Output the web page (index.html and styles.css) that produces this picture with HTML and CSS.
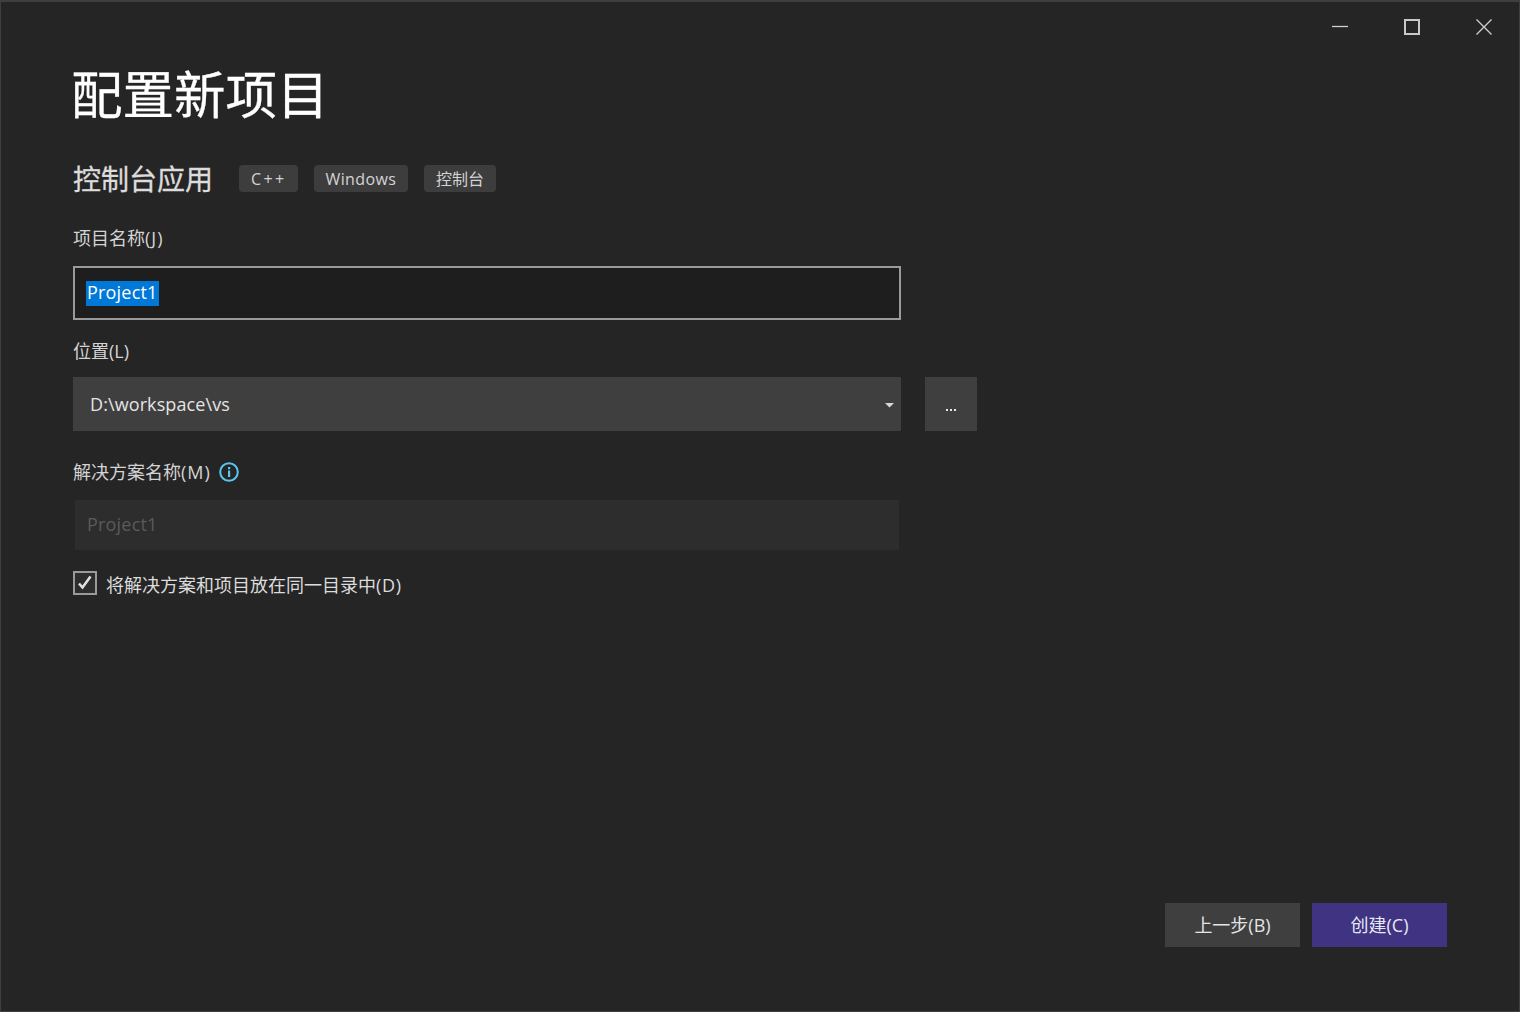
FILE: index.html
```html
<!DOCTYPE html>
<html lang="zh-CN">
<head>
<meta charset="utf-8">
<title>配置新项目</title>
<link rel="stylesheet" href="styles.css">
</head>
<body>
<div class="window">
  <div class="caption">
    <button class="cap-btn"><svg width="16" height="16" viewBox="0 0 16 16"><path d="M0 7.500h16" stroke="#d0d0d0" stroke-width="1.300"/></svg></button>
    <button class="cap-btn"><svg width="16" height="16" viewBox="0 0 16 16"><rect x="1" y="1" width="14" height="14" fill="none" stroke="#c8c8c8" stroke-width="2"/></svg></button>
    <button class="cap-btn"><svg width="16" height="16" viewBox="0 0 16 16"><path d="M.5.5l15 15M15.500.5l-15 15" stroke="#d0d0d0" stroke-width="1.300" fill="none"/></svg></button>
  </div>
  <main class="content">
    <h1 class="title">配置新项目</h1>
    <div class="subhead">
      <h2 class="subtitle">控制台应用</h2>
      <div class="tags">
        <span class="tag tag-cpp">C++</span>
        <span class="tag tag-win">Windows</span>
        <span class="tag">控制台</span>
      </div>
    </div>
    <label class="label label-name">项目名称<span class="key">(J)</span></label>
    <div class="input input-active"><span class="selected">Project1</span></div>
    <label class="label label-loc">位置(L)</label>
    <div class="loc-row">
      <div class="select"><span>D:\workspace\vs</span><svg class="caret" width="9" height="5" viewBox="0 0 9 5"><path d="M0 0h9L4.500 4.500z" fill="#d8d8d8"/></svg></div>
      <button class="browse"><span class="dots"><i></i><i></i><i></i></span></button>
    </div>
    <div class="label label-sol">
      <span>解决方案名称<span class="key">(M)</span></span>
      <svg class="info" width="20" height="20" viewBox="0 0 20 20"><circle cx="10" cy="10" r="8.800" fill="none" stroke="#5cc5ef" stroke-width="2"/><rect x="9" y="8.500" width="2.200" height="6.500" fill="#5cc5ef"/><rect x="9" y="5" width="2.200" height="2.200" fill="#5cc5ef"/></svg>
    </div>
    <div class="input-disabled">Project1</div>
    <div class="check-row">
      <span class="checkbox"><svg width="18" height="18" viewBox="0 0 18 18"><path d="M3 9.500l3.500 4L14.500 2.500" fill="none" stroke="#e0e0e0" stroke-width="2.600"/></svg></span>
      <span class="check-label">将解决方案和项目放在同一目录中<span class="key-d">(D)</span></span>
    </div>
  </main>
  <footer class="footer">
    <button class="btn">上一步(B)</button>
    <button class="btn btn-primary">创建(C)</button>
  </footer>
</div>
</body>
</html>
```
FILE: styles.css
```css
* { box-sizing: border-box; }
html, body { margin: 0; height: 100%; }
body {
  background: #252525;
  color: #dcdcdc;
  font-family: "Open Sans", "Noto Sans CJK SC", sans-serif;
  overflow: hidden;
}
.window {
  width: 1520px;
  height: 1012px;
  background: #252525;
  border: 1px solid #3f3f40;
  border-top-width: 2px;
  display: flex;
  flex-direction: column;
}
.caption {
  display: flex;
  justify-content: flex-end;
  height: 56px;
  flex: none;
  padding-top: 17px;
  padding-right: 27px;
  gap: 56px;
}
.cap-btn {
  width: 16px;
  height: 16px;
  padding: 0;
  border: 0;
  background: none;
  display: block;
}
.cap-btn svg { display: block; }
.content {
  flex: 1;
  padding-left: 72px;
  display: flex;
  flex-direction: column;
  align-items: flex-start;
}
.title {
  margin: 0 0 0 -2px;
  font-size: 51.500px;
  line-height: 72px;
  font-weight: 400;
  color: #fff;
  -webkit-text-stroke: 0.3px #fff;
}
.subhead {
  display: flex;
  align-items: center;
  margin-top: 31px;
  height: 36px;
}
.subtitle {
  margin: 0;
  font-size: 28px;
  line-height: 36px;
  font-weight: 400;
  color: #dcdcdc;
  -webkit-text-stroke: 0.3px #dcdcdc;
}
.tags { display: flex; gap: 16px; margin-left: 26px; margin-top: -2px; }
.tag {
  height: 27px;
  line-height: 29px;
  padding: 0 12px;
  background: #3d3d3d;
  border-radius: 4px;
  font-size: 16px;
  color: #d4d4d4;
}
.tag-win { letter-spacing: 0.350px; }
.tag-cpp { letter-spacing: 2.400px; padding-right: 11px; }
.label {
  font-size: 18px;
  line-height: 24px;
  color: #d4d4d4;
}
.key { letter-spacing: 1px; }
.key-d { letter-spacing: 0.700px; }
.label-name { margin-top: 29px; }
.input {
  margin-top: 16px;
  width: 828px;
  height: 54px;
  background: #1e1e1e;
  border: 2px solid #9a9a9a;
  padding: 11px;
  display: flex;
  align-items: center;
  font-size: 18px;
}
.selected {
  background: #0078d7;
  color: #fff;
  height: 25px;
  line-height: 22px;
  padding: 0 1px 0 1px;
  letter-spacing: 0.200px;
}
.label-loc { margin-top: 19px; }
.loc-row { display: flex; gap: 24px; margin-top: 14px; }
.select {
  width: 828px;
  height: 54px;
  background: #3f3f3f;
  padding: 0 7px 0 17px;
  display: flex;
  align-items: center;
  justify-content: space-between;
  font-size: 18px;
  color: #e4e4e4;
}
.select span { letter-spacing: 0.100px; }
.caret { display: block; margin-top: 2px; }
.browse {
  width: 52px;
  height: 54px;
  background: #3f3f3f;
  border: 0;
  padding: 0;
  display: flex;
  align-items: center;
  justify-content: center;
}
.dots { display: flex; gap: 2px; margin-top: 12px; }
.dots i { width: 2px; height: 2px; background: #e8e8e8; display: block; }
.label-sol {
  margin-top: 29px;
  display: flex;
  align-items: center;
  gap: 8px;
}
.info { display: block; }
.input-disabled {
  margin-top: 16px;
  margin-left: 2px;
  width: 824px;
  height: 50px;
  background: #2d2d2e;
  color: #5a5a5a;
  padding-left: 12px;
  font-size: 18px;
  line-height: 48px;
  letter-spacing: 0.200px;
}
.check-row {
  margin-top: 21px;
  display: flex;
  align-items: flex-start;
  gap: 9px;
}
.checkbox {
  width: 24px;
  height: 24px;
  border: 2px solid #9a9a9a;
  background: #2d2d2e;
  display: block;
  padding: 1px;
}
.checkbox svg { display: block; }
.check-label { font-size: 18px; line-height: 24px; color: #dcdcdc; margin-top: 2px; }
.footer {
  display: flex;
  justify-content: flex-end;
  gap: 12px;
  padding: 0 72px 64px 0;
}
.btn {
  width: 135px;
  height: 44px;
  border: 0;
  background: #3f3f3f;
  color: #e4e4e4;
  font-family: inherit;
  font-size: 18px;
  padding: 0 0 2px;
}
.btn-primary { background: #3f3382; color: #e8e8f4; }
```
